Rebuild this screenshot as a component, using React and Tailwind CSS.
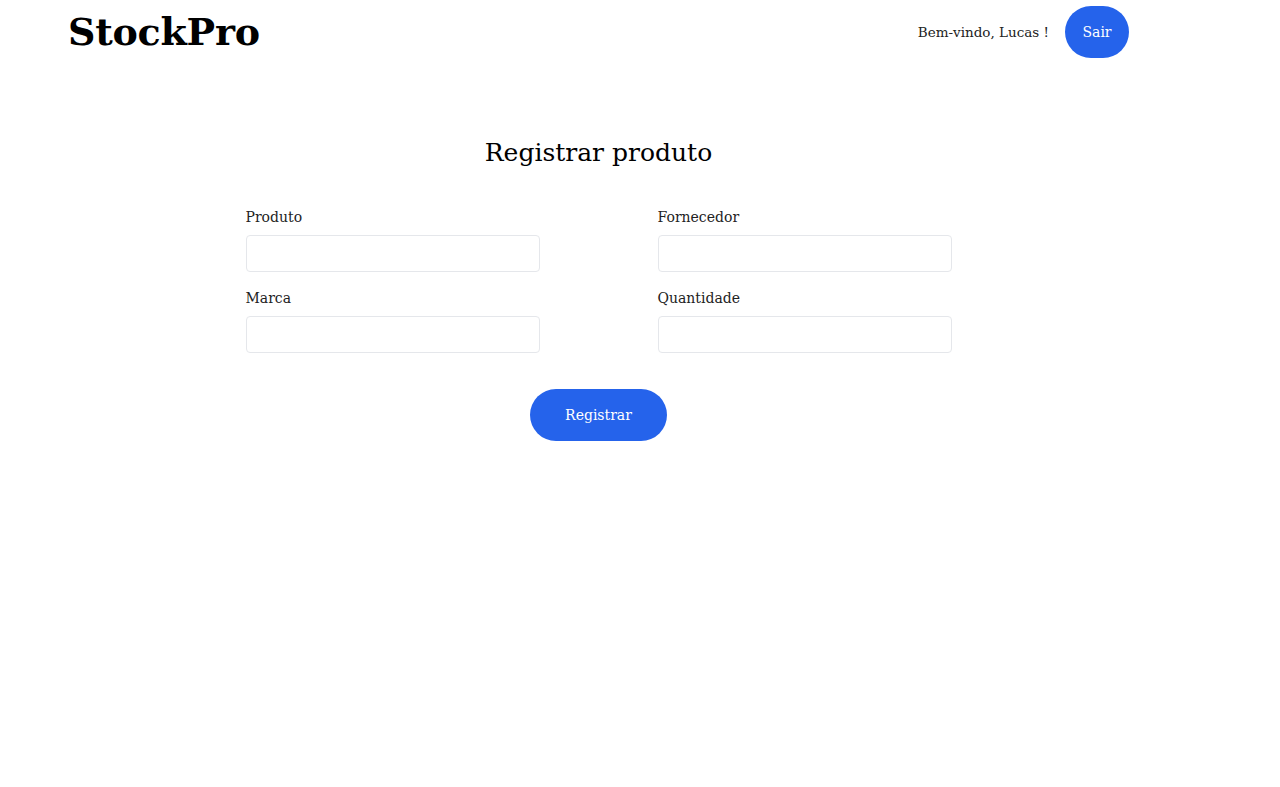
import React from 'react';

function Field({ label }) {
  return (
    <div className="flex flex-col">
      <label className="text-[14px] text-[#222] leading-[20px] mb-[8px]">{label}</label>
      <input
        type="text"
        className="w-[294px] h-[37px] rounded border border-[#e5e7eb] px-2 outline-none"
      />
    </div>
  );
}

export default function App() {
  return (
    <div className="min-h-screen bg-white font-['DejaVu_Serif',serif] text-black">
      <div className="w-[1197px]">
        <header className="flex items-center justify-between pl-[68px] pr-[68px] pt-[6px]">
          <h1 className="text-[38px] font-bold leading-[52px] tracking-[-0.25px]">StockPro</h1>
          <div className="flex items-center gap-[16px]">
            <span className="text-[13.5px] text-[#222]">Bem-vindo, Lucas !</span>
            <button className="w-[64px] h-[52px] rounded-full bg-[#2563eb] text-white text-[14px]">
              Sair
            </button>
          </div>
        </header>

        <main className="flex flex-col items-center pt-[78px]">
          <h2 className="text-[25px] leading-[34px]">Registrar produto</h2>
          <form className="mt-[37px] grid grid-cols-2 gap-x-[118px] gap-y-[16px]">
            <Field label="Produto" />
            <Field label="Fornecedor" />
            <Field label="Marca" />
            <Field label="Quantidade" />
          </form>
          <button className="mt-[36px] w-[137px] h-[52px] rounded-full bg-[#2563eb] text-white text-[14px]">
            Registrar
          </button>
        </main>
      </div>
    </div>
  );
}
